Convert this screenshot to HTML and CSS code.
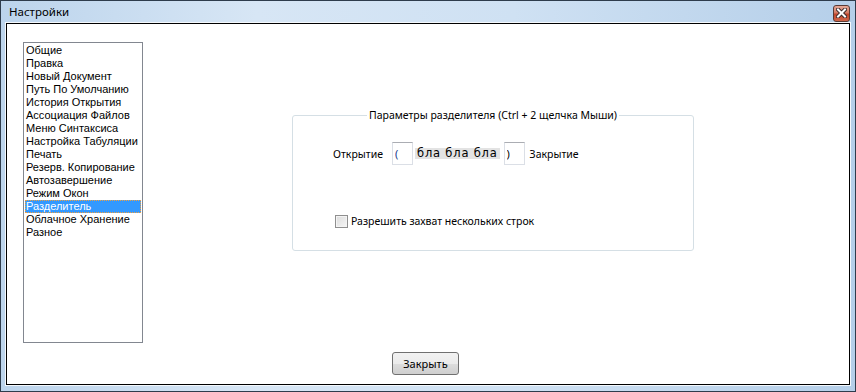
FILE: index.html
```html
<!DOCTYPE html>
<html lang="ru">
<head>
    <meta charset="UTF-8">
    <title>Настройки</title>
    <link rel="stylesheet" href="styles.css">
</head>
<body>

    <!-- Settings dialog -->
    <div class="window">
        <div class="titlebar">
            <span class="title">Настройки</span>
            <span class="close-btn">
                <svg width="11" height="10" viewBox="0 0 11 10">
                    <path d="M2 1.5 L9 8.5 M9 1.5 L2 8.5" stroke="#3a2a2a" stroke-width="4" stroke-linecap="square"/>
                    <path d="M2 1.5 L9 8.5 M9 1.5 L2 8.5" stroke="#fff" stroke-width="2" stroke-linecap="square"/>
                </svg>
            </span>
        </div>

        <div class="client">
            <div class="content">
                <ul class="listbox">
                    <li>Общие</li>
                    <li>Правка</li>
                    <li>Новый Документ</li>
                    <li>Путь По Умолчанию</li>
                    <li>История Открытия</li>
                    <li>Ассоциация Файлов</li>
                    <li>Меню Синтаксиса</li>
                    <li>Настройка Табуляции</li>
                    <li>Печать</li>
                    <li>Резерв. Копирование</li>
                    <li>Автозавершение</li>
                    <li>Режим Окон</li>
                    <li class="selected">Разделитель</li>
                    <li>Облачное Хранение</li>
                    <li>Разное</li>
                </ul>

                <div class="main">
                    <fieldset class="group">
                        <legend>Параметры разделителя (Ctrl + 2 щелчка Мыши)</legend>
                        <div class="group-body">
                            <div class="delims">
                                <span>Открытие</span>
                                <input type="text" class="delim open" value="(">
                                <span class="sample">бла бла бла</span>
                                <input type="text" class="delim" value=")">
                                <span class="after">Закрытие</span>
                            </div>
                            <label class="check">
                                <span class="checkbox"></span>
                                Разрешить захват нескольких строк
                            </label>
                        </div>
                    </fieldset>
                </div>
            </div>

            <div class="footer">
                <button class="btn">Закрыть</button>
            </div>
        </div>
    </div>

</body>
</html>
```

FILE: styles.css
```css
body {
    margin: 0;
    font-family: "Noto Sans", "Open Sans", sans-serif;
    font-size: 12px;
    color: #000;
}

.window {
    box-sizing: border-box;
    width: 856px;
    height: 392px;
    border: 1px solid #2e3c4c;
    padding: 0 5px 6px 5px;
    background: linear-gradient(90deg, #bcd4ec 0%, #d7e6f5 30%, #cfe1f3 60%, #b5cfe9 100%);
    display: flex;
    flex-direction: column;
}

.titlebar {
    height: 22px;
    display: flex;
    align-items: center;
    justify-content: space-between;
}

.title {
    margin-left: 3px;
    font-size: 11.5px;
    line-height: 22px;
}

.close-btn {
    box-sizing: border-box;
    width: 17px;
    height: 17px;
    margin-top: 2px;
    border: 1px solid #5a3a34;
    border-radius: 3px;
    background: linear-gradient(#e6a998 0%, #d47a63 45%, #c0442a 55%, #d0674a 100%);
    display: flex;
    align-items: center;
    justify-content: center;
}

.client {
    flex: 1;
    background: #fff;
    border: 1px solid #000;
    box-shadow: 0 0 0 1px #f4f8fc;
    display: flex;
    flex-direction: column;
}

.content {
    display: flex;
    padding: 18px 16px 0 16px;
}

.listbox {
    box-sizing: border-box;
    width: 120px;
    height: 301px;
    margin: 0;
    padding: 1px;
    list-style: none;
    border: 1px solid #828790;
    font-family: "Liberation Sans", Arial, sans-serif;
    font-size: 11px;
}

.listbox li {
    height: 13px;
    line-height: 13px;
    padding-left: 1px;
    white-space: nowrap;
}

.listbox li.selected {
    background: #3399ff;
    color: #fff;
    outline: 1px dotted #f0a040;
    outline-offset: -1px;
}

.main {
    flex: 1;
    font-size: 10.5px;
}

.group {
    box-sizing: border-box;
    width: 402px;
    height: 143px;
    margin: 66px 0 0 149px;
    padding: 0;
    border: 1px solid #d5dfe5;
    border-radius: 3px;
}

.group legend {
    margin: 0 auto;
    padding: 0 2px;
    line-height: 14px;
}

.group-body {
    padding-left: 40px;
}

.delims {
    display: flex;
    align-items: center;
    margin-top: 20px;
    height: 23px;
}

.delim {
    box-sizing: border-box;
    width: 21px;
    height: 23px;
    margin-left: 9px;
    padding: 0 2px;
    border: 1px solid #dbdfe6;
    border-top-color: #abadb3;
    font-family: inherit;
    font-size: 11px;
}

.delim.open {
    color: #1a3a8a;
}

.sample {
    margin-left: 2px;
    padding: 0 2px;
    background: #e3e3e3;
    font-family: "DejaVu Sans", sans-serif;
    font-size: 11.5px;
    letter-spacing: 0.8px;
    line-height: 11px;
}

.sample + .delim {
    margin-left: 4px;
}

.after {
    margin-left: 5px;
}

.check {
    display: flex;
    align-items: center;
    margin-top: 49px;
    margin-left: 2px;
    gap: 3px;
}

.checkbox {
    box-sizing: border-box;
    width: 13px;
    height: 13px;
    border: 1px solid #8f8f8f;
    background: linear-gradient(135deg, #dcdcdc, #f6f6f6);
    box-shadow: inset 0 0 0 1px #f4f4f4;
}

.footer {
    display: flex;
    justify-content: center;
    padding-right: 5px;
    margin-top: 9px;
}

.btn {
    box-sizing: border-box;
    width: 67px;
    height: 23px;
    border: 1px solid #707070;
    border-radius: 3px;
    background: linear-gradient(#f2f2f2 0%, #ebebeb 50%, #dddddd 51%, #cfcfcf 100%);
    font-family: "Noto Sans", "Open Sans", sans-serif;
    font-size: 11px;
    padding: 0;
}
```
